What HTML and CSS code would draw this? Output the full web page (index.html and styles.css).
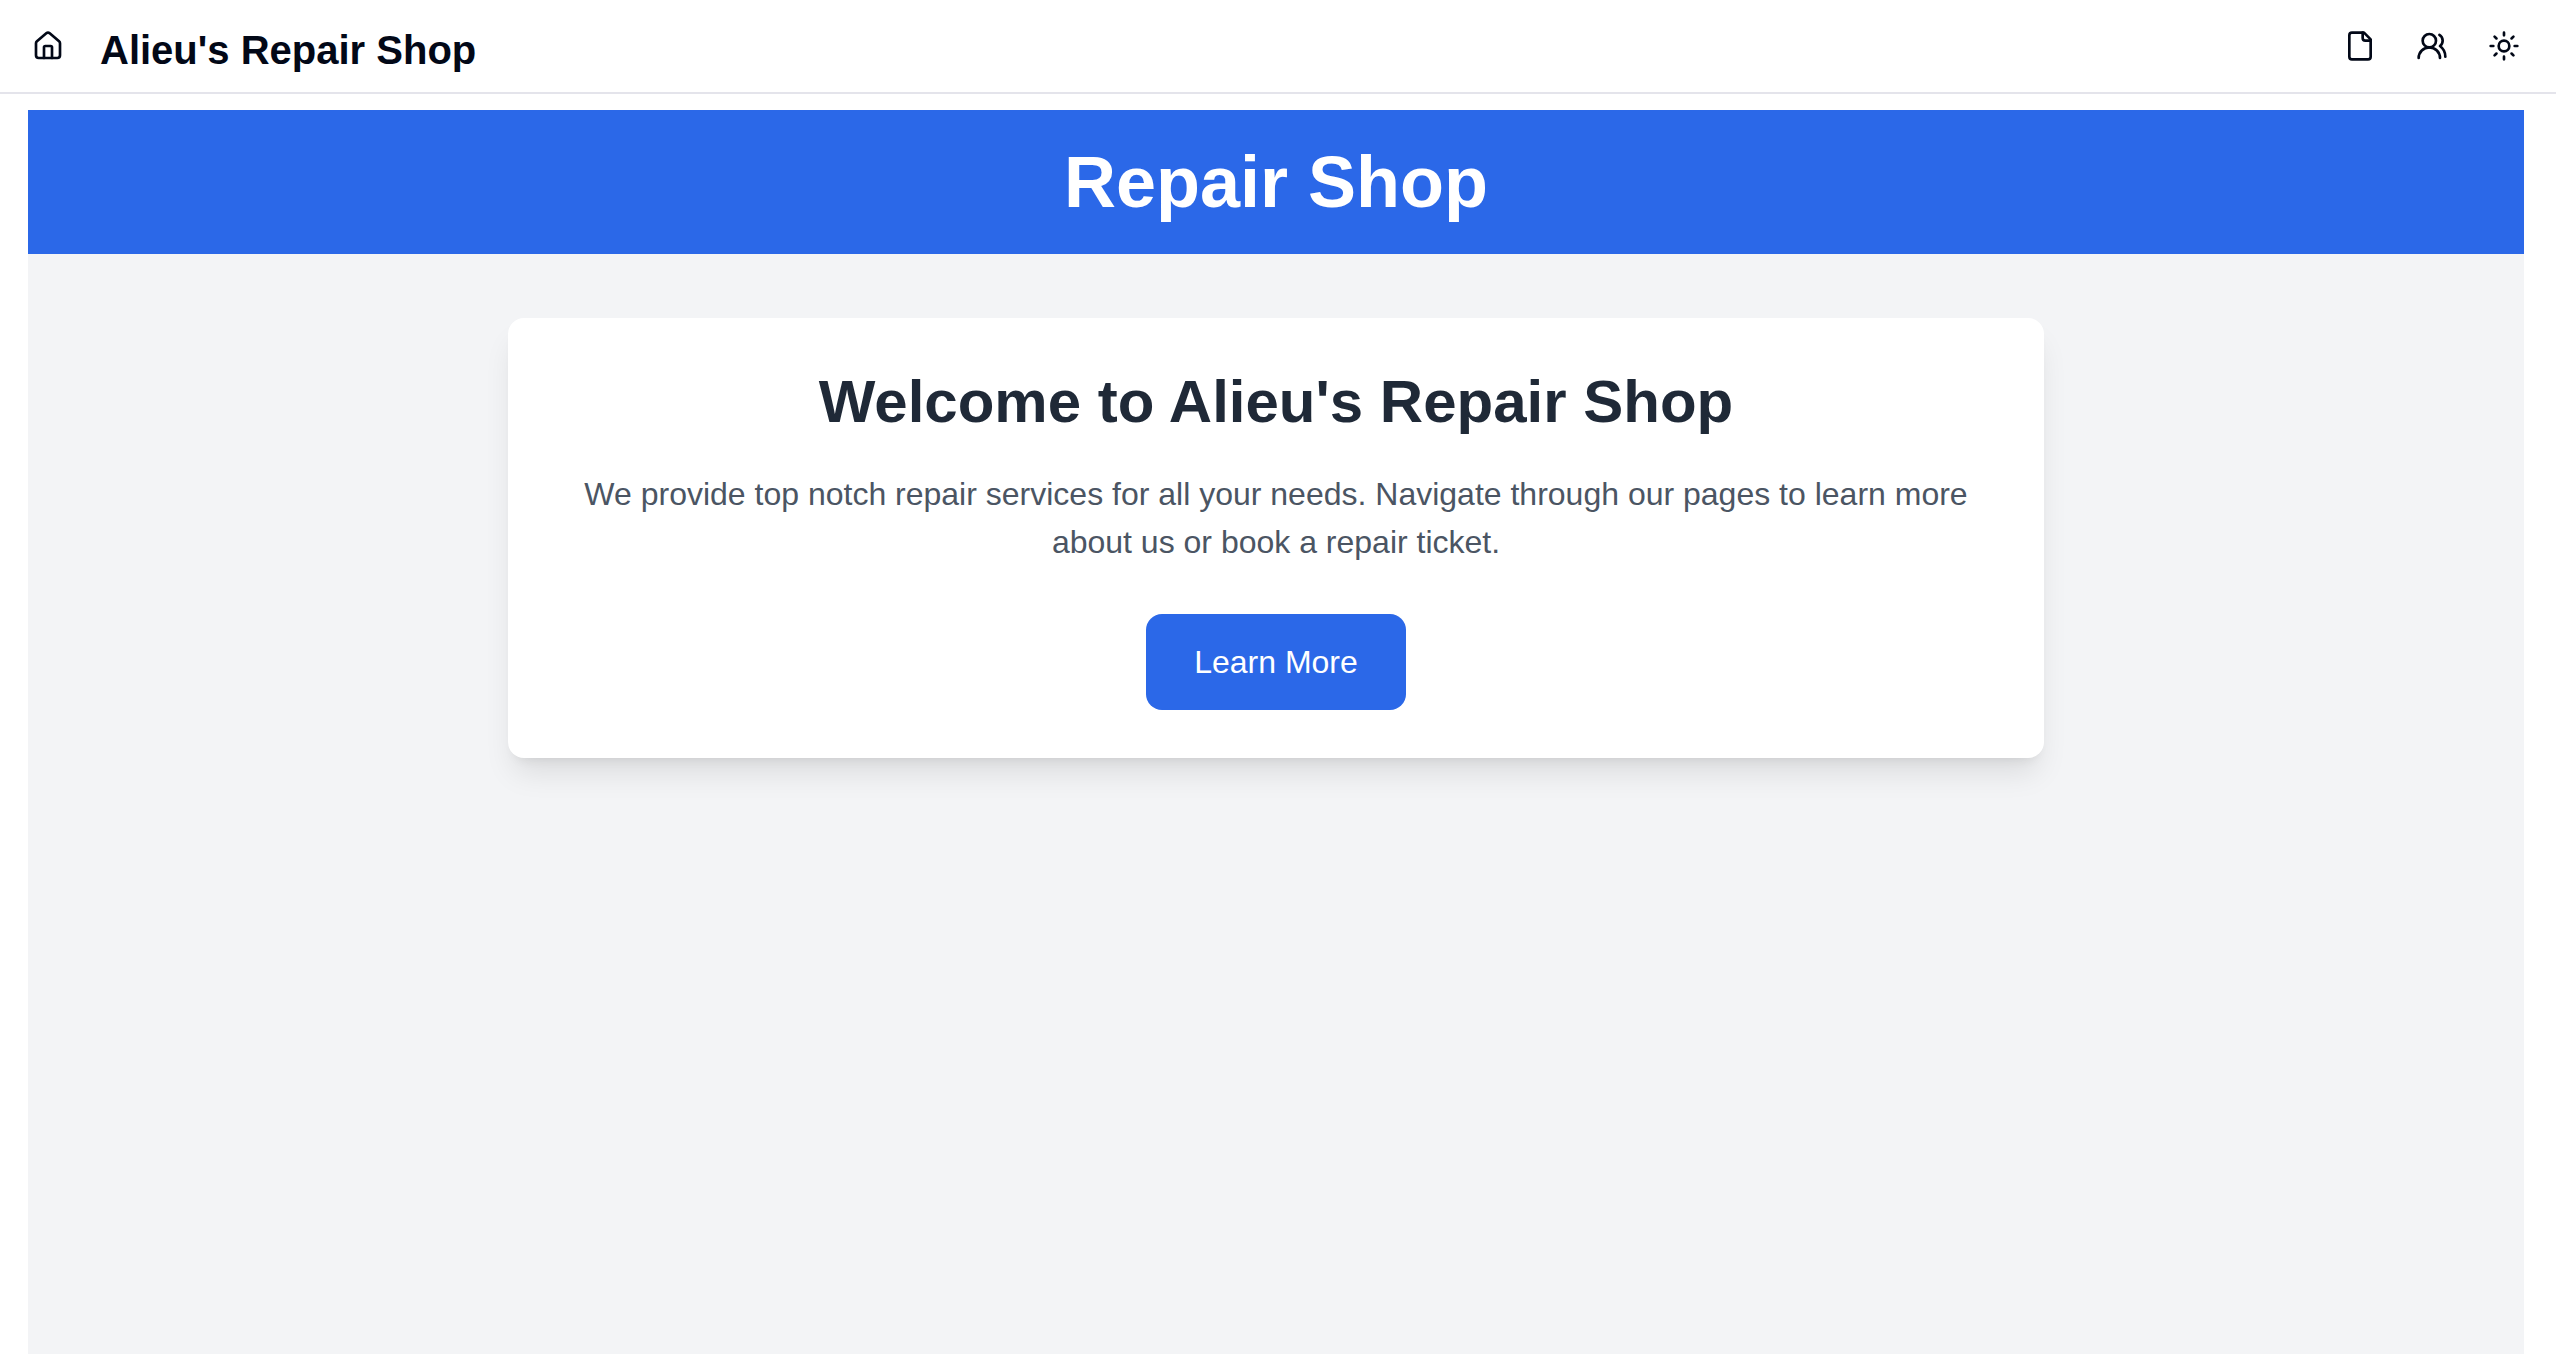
FILE: index.html
```html
<!DOCTYPE html>
<html lang="en">
<head>
<meta charset="utf-8">
<meta name="viewport" content="width=device-width, initial-scale=1">
<title>Alieu's Repair Shop</title>
<link rel="stylesheet" href="styles.css">
</head>
<body>
<header class="topbar">
  <div class="topbar-group">
    <a class="icon-link" href="#" aria-label="Home"><svg class="icon" viewBox="0 0 24 24"><path d="M15 21v-8a1 1 0 0 0-1-1h-4a1 1 0 0 0-1 1v8"/><path d="M3 10a2 2 0 0 1 .709-1.528l7-5.999a2 2 0 0 1 2.582 0l7 5.999A2 2 0 0 1 21 10v9a2 2 0 0 1-2 2H5a2 2 0 0 1-2-2z"/></svg></a>
    <a class="brand" href="#">Alieu's Repair Shop</a>
  </div>
  <nav class="topbar-actions" aria-label="Main">
    <a class="icon-link" href="#" aria-label="Tickets"><svg class="icon" viewBox="0 0 24 24"><path d="M15 2H6a2 2 0 0 0-2 2v16a2 2 0 0 0 2 2h12a2 2 0 0 0 2-2V7Z"/><path d="M14 2v4a2 2 0 0 0 2 2h4"/></svg></a>
    <a class="icon-link" href="#" aria-label="Customers"><svg class="icon" viewBox="0 0 24 24"><path d="M18 21a8 8 0 0 0-16 0"/><circle cx="10" cy="8" r="5"/><path d="M22 20c0-3.370-2-6.500-4-8a5 5 0 0 0-.450-8.300"/></svg></a>
    <button class="icon-link" type="button" aria-label="Toggle theme"><svg class="icon" viewBox="0 0 24 24"><circle cx="12" cy="12" r="4"/><path d="M12 2v2M12 20v2M4.930 4.930l1.410 1.410M17.660 17.660l1.410 1.410M2 12h2M20 12h2M6.340 17.660l-1.410 1.410M19.070 4.930l-1.410 1.410"/></svg></button>
  </nav>
</header>
<main class="page">
  <div class="banner"><h1 class="banner-title">Repair Shop</h1></div>
  <section class="card">
    <h2 class="card-title">Welcome to Alieu's Repair Shop</h2>
    <p class="card-text">We provide top notch repair services for all your needs. Navigate through our pages to learn more about us or book a repair ticket.</p>
    <button class="primary" type="button">Learn More</button>
  </section>
</main>
</body>
</html>
```
FILE: styles.css
```css
*, *::before, *::after { box-sizing: border-box; }
body {
  margin: 0;
  min-height: 100vh;
  display: flex;
  flex-direction: column;
  background: #fff;
  color: #020817;
  font-family: "Liberation Sans", Arial, sans-serif;
}
h1, h2, p { margin: 0; }
.topbar {
  display: flex;
  justify-content: space-between;
  padding: 16px 20px 16px 16px;
  border-bottom: 2px solid #e4e4eb;
}
.topbar-group { display: flex; align-items: flex-start; gap: 20px; }
.topbar-actions { display: flex; gap: 8px; }
.icon-link {
  display: flex;
  align-items: center;
  justify-content: center;
  width: 64px;
  height: 60px;
  padding: 0;
  border: 0;
  background: none;
  color: inherit;
}
.icon {
  width: 32px;
  height: 32px;
  fill: none;
  stroke: currentColor;
  stroke-width: 2;
  stroke-linecap: round;
  stroke-linejoin: round;
}
.brand {
  padding-top: 10px;
  color: inherit;
  font-size: 40px;
  font-weight: 700;
  line-height: 48px;
  text-decoration: none;
}
.page {
  flex: 1;
  margin: 16px 32px 0 28px;
  background: #f3f4f6;
}
.banner {
  padding: 32px;
  background: #2b68e8;
  color: #fff;
  text-align: center;
}
.banner-title { font-size: 72px; line-height: 80px; }
.card {
  max-width: 1536px;
  margin: 64px auto;
  padding: 48px;
  border-radius: 16px;
  background: #fff;
  box-shadow: 0 20px 30px -6px rgb(0 0 0 / 10%), 0 8px 12px -8px rgb(0 0 0 / 10%);
  text-align: center;
}
.card-title { margin-bottom: 32px; color: #1f2937; font-size: 60px; line-height: 72px; }
.card-text { margin-bottom: 48px; color: #4b5563; font-size: 32px; line-height: 48px; }
.primary {
  padding: 24px 48px;
  border: 0;
  border-radius: 16px;
  background: #2b68e8;
  color: #fff;
  font: inherit;
  font-size: 32px;
  line-height: 48px;
}
```
